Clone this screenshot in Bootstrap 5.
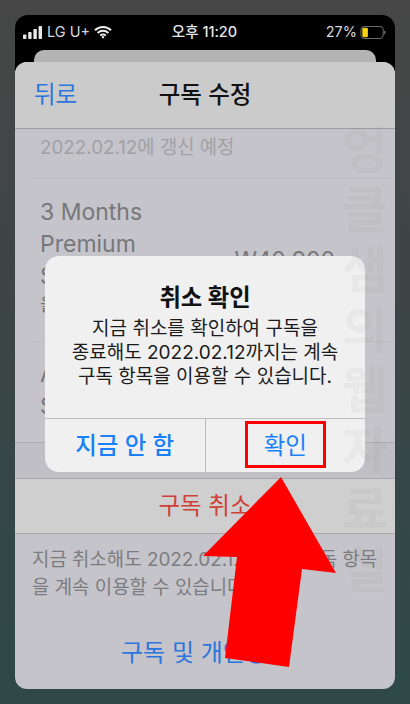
<!DOCTYPE html>
<html lang="ko">
<head>
<meta charset="utf-8">
<link rel="stylesheet" href="https://cdn.jsdelivr.net/npm/bootstrap@5.3.0/dist/css/bootstrap.min.css">
<style>
html,body{height:100%;margin:0}
body{background:linear-gradient(180deg,#474747 0%,#3f4545 35%,#2e4848 100%);font-family:"Inter","Noto Sans CJK KR",sans-serif;overflow:hidden;padding:15px 15px 15px}
.ph-shell{position:relative;height:100%;background:linear-gradient(#000 60px,transparent 60px);border-radius:13px 13px 0 0}
.ph-status{height:35px;padding:0 9px 0 8px;color:#d8d8d8;font-size:14.5px;line-height:1}
.ph-status-l{width:130px}
.ph-status-r{width:130px;gap:3px}
.ph-pct{font-size:14.5px}
.ph-time{font-weight:500;font-size:14.5px;color:#e6e6e6}
.ph-peek{height:12px;margin:0 19px;background:#b4b4b4;border-radius:10px 10px 0 0}
.ph-sheet{height:627px;background:#c5c4ca;border-radius:12px;overflow:hidden}
.ph-head{height:67px;background:#cbcbcb;border-bottom:1px solid #9d9da1;padding:0 19px;position:relative}
.ph-back{color:#2a76dc;font-size:23.5px}
.ph-title{position:absolute;left:0;right:0;text-align:center;font-size:23.5px;font-weight:500;color:#111}
.ph-row1{height:50px;padding:6px 25px 0 12px;color:#a0a0a5;font-size:18.8px;line-height:26px;border-bottom:1px solid #bdbcc2;margin-left:13px}
.ph-row2{height:163px;margin-left:13px;padding:17px 0 0 12px;border-bottom:1px solid #bdbcc2;position:relative;color:#77777b;font-size:23px;line-height:32px}
.ph-row3{height:100px;margin-left:13px;padding:16px 0 0 12px;color:#77777b;font-size:23px;line-height:32px}
.ph-sm{font-size:18px;line-height:26px}
.ph-price{position:absolute;right:60px;top:65px;line-height:32px}
.ph-gap{height:37px;background:#c0bfc5;border-top:1px solid #adadb1;border-bottom:1px solid #a9a9ad}
.ph-cancel{height:55px;background:#cfcfcf;border-bottom:1px solid #a9a9ad;color:#cf4038;font-size:23.5px}
.ph-note{padding:12px 17px 0;color:#7c7c80;font-size:18.9px;line-height:28px}
.ph-link{margin-top:34px;color:#2a76dc;font-size:24px;line-height:34px;text-align:center}
.ph-alert{position:absolute;left:30px;top:241px;width:320px;height:216px;background:#f0f0f1;border:0;border-radius:14px;overflow:hidden;color:#111}
.ph-alert-body{height:163px;padding-top:27px;text-align:center;border-bottom:1px solid #bcbcbf}
.ph-alert-title{font-size:23.3px;font-weight:700;line-height:30px;margin-bottom:4px}
.ph-alert-text{font-size:19px;line-height:24px;color:#1b1b1b}
.ph-alert-foot{height:53px}
.ph-alert-btn{flex:1 1 0;border:0;border-radius:0;background:transparent;color:#1a80f5;font-size:23.5px;padding:0;line-height:1}
.ph-alert-btn-b{font-weight:500;border-right:1px solid #bcbcbf}
.ph-mark{position:absolute;left:323px;top:105px;width:54px;font-size:50px;line-height:60px;font-weight:700;word-break:break-all;color:rgba(90,90,95,.05);pointer-events:none;text-align:center}
.ph-box{position:absolute;left:230px;top:406px;width:81px;height:47px;border:3px solid #f00}
.ph-arrow{position:absolute;left:0;top:0;overflow:visible;pointer-events:none}
</style>
</head>
<body>
<div class="ph-shell">
  <div class="ph-status d-flex align-items-center justify-content-between">
    <div class="ph-status-l d-flex align-items-center gap-1">
      <svg width="20" height="13" viewBox="0 0 20 13"><rect x="0" y="8.5" width="3.4" height="4.5" rx=".8" fill="#e8e8e8"/><rect x="5.2" y="6" width="3.4" height="7" rx=".8" fill="#e8e8e8"/><rect x="10.4" y="3" width="3.4" height="10" rx=".8" fill="#e8e8e8"/><rect x="15.6" y="0" width="3.4" height="13" rx=".8" fill="#e8e8e8"/></svg>
      <span>LG U+</span>
      <svg width="18" height="13" viewBox="0 0 18 13"><path d="M1 4.3a11.5 11.5 0 0 1 16 0M3.6 7a7.8 7.8 0 0 1 10.8 0M6.2 9.6a4 4 0 0 1 5.6 0" fill="none" stroke="#eee" stroke-width="2"/><path d="M7.5 11l1.5-1.5 1.5 1.5L9 12.7z" fill="#eee"/></svg>
    </div>
    <div class="ph-time">오후 11:20</div>
    <div class="ph-status-r d-flex align-items-center justify-content-end">
      <span class="ph-pct">27%</span>
      <svg width="26" height="13" viewBox="0 0 27 14"><rect x=".5" y=".5" width="24" height="13" rx="3.5" fill="none" stroke="#777"/><rect x="2" y="2" width="6" height="10" rx="1.5" fill="#f7d114"/><rect x="25.5" y="5" width="1.2" height="4" rx=".6" fill="#777"/></svg>
    </div>
  </div>
  <div class="ph-peek"></div>
  <div class="ph-sheet">
    <div class="ph-head d-flex align-items-center">
      <span class="ph-title">구독 수정</span>
      <span class="ph-back">뒤로</span>
    </div>
    <div class="ph-row1">2022.02.12에 갱신 예정</div>
    <div class="ph-row2">
      <div>3 Months</div><div>Premium</div><div>Subscription</div>
      <div class="ph-sm">을</div>
      <div class="ph-price">W40,900</div>
    </div>
    <div class="ph-row3"><div>Auto-Renew</div><div>Subscription</div></div>
    <div class="ph-gap"></div>
    <div class="ph-cancel d-flex align-items-center justify-content-center">구독 취소</div>
    <div class="ph-note">지금 취소해도 2022.02.12까지는 구독 항목을 계속 이용할 수 있습니다.</div>
    <div class="ph-link">구독 및 개인정보</div>
  </div>

  <div class="ph-alert card">
    <div class="ph-alert-body">
      <div class="ph-alert-title">취소 확인</div>
      <div class="ph-alert-text">지금 취소를 확인하여 구독을<br>종료해도 2022.02.12까지는 계속<br>구독 항목을 이용할 수 있습니다.</div>
    </div>
    <div class="ph-alert-foot d-flex">
      <button type="button" class="btn ph-alert-btn ph-alert-btn-b">지금 안 함</button>
      <button type="button" class="btn ph-alert-btn">확인</button>
    </div>
  </div>

  <div class="ph-mark">엉클샘의웹자료실</div>
  <div class="ph-box"></div>
  <svg class="ph-arrow" width="380" height="674" viewBox="15 15 380 674"><polygon points="281,477 336,573 302,569 289,667 225,658 237,557 203,556" fill="#f00"/></svg>
</div>
<script src="https://cdn.jsdelivr.net/npm/bootstrap@5.3.0/dist/js/bootstrap.bundle.min.js"></script>
</body>
</html>
